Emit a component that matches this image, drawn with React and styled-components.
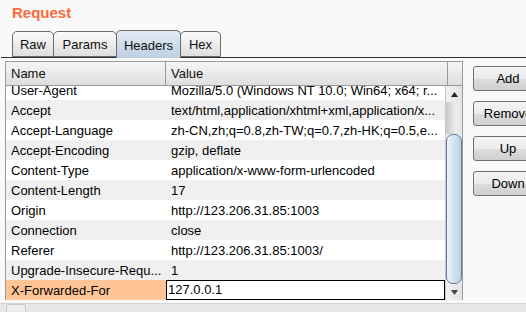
import React from "react";
import styled, { createGlobalStyle } from "styled-components";

const GlobalStyle = createGlobalStyle`
  html, body {
    margin: 0;
    padding: 0;
    background: #f9f9f9;
    overflow: hidden;
  }
  body {
    font-family: "Liberation Sans", Arial, sans-serif;
    font-size: 13px;
    color: #000;
  }
`;

const headers = [
  ["User-Agent", "Mozilla/5.0 (Windows NT 10.0; Win64; x64; r..."],
  ["Accept", "text/html,application/xhtml+xml,application/x..."],
  ["Accept-Language", "zh-CN,zh;q=0.8,zh-TW;q=0.7,zh-HK;q=0.5,e..."],
  ["Accept-Encoding", "gzip, deflate"],
  ["Content-Type", "application/x-www-form-urlencoded"],
  ["Content-Length", "17"],
  ["Origin", "http://123.206.31.85:1003"],
  ["Connection", "close"],
  ["Referer", "http://123.206.31.85:1003/"],
  ["Upgrade-Insecure-Requ...", "1"],
  ["X-Forwarded-For", "127.0.0.1"],
];

const tabs = [
  { label: "Raw", width: 42 },
  { label: "Params", width: 64 },
  { label: "Headers", width: 65 },
  { label: "Hex", width: 41 },
];
const buttons = ["Add", "Remove", "Up", "Down"];

const App = () => {
  return (
    <>
      <GlobalStyle />
      <Page>
        <Title>Request</Title>
        <TabStrip>
          {tabs.map((t) => (
            <Tab key={t.label} $w={t.width} $active={t.label === "Headers"}>
              {t.label}
            </Tab>
          ))}
        </TabStrip>
        <TabRule />
        <Body>
          <Table>
            <HeadRow>
              <HeadCell $w={160}>Name</HeadCell>
              <HeadCell $w={282}>Value</HeadCell>
              <HeadCorner />
            </HeadRow>
            <TableBody>
              <Viewport>
                <RowList>
                  {headers.map(([name, value], i) => {
                    const selected = i === headers.length - 1;
                    return (
                      <Row key={name} $striped={i % 2 === 1}>
                        <NameCell $selected={selected}>{name}</NameCell>
                        <ValueCell $editing={selected}>{value}</ValueCell>
                      </Row>
                    );
                  })}
                </RowList>
              </Viewport>
              <VScroll>
                <Arrow>
                  <svg width="7" height="5" viewBox="0 0 7 5">
                    <path d="M3.5 0 L7 5 L0 5 Z" fill="#222" />
                  </svg>
                </Arrow>
                <Track />
                <Thumb />
                <Arrow>
                  <svg width="7" height="5" viewBox="0 0 7 5">
                    <path d="M0 0 L7 0 L3.5 5 Z" fill="#444" />
                  </svg>
                </Arrow>
              </VScroll>
            </TableBody>
          </Table>
          <ButtonColumn>
            {buttons.map((b) => (
              <Button key={b}>{b}</Button>
            ))}
          </ButtonColumn>
        </Body>
        <BottomBar>
          <BottomThumb />
        </BottomBar>
      </Page>
    </>
  );
};

const Page = styled.div`
  width: 526px;
  height: 312px;
  display: flex;
  flex-direction: column;
  overflow: hidden;
`;

const Title = styled.div`
  margin: 4px 0 0 12px;
  height: 18px;
  line-height: 18px;
  font-size: 15px;
  font-weight: bold;
  color: #fa6a3c;
`;

const TabStrip = styled.div`
  margin: 8px 0 0 1px;
  padding-left: 12px;
  height: 27px;
  display: flex;
  align-items: flex-end;
  border-bottom: 1px solid #2b2f36;
`;

const Tab = styled.div`
  box-sizing: border-box;
  width: ${(p) => p.$w}px;
  height: ${(p) => (p.$active ? "28px" : "26px")};
  margin-bottom: ${(p) => (p.$active ? "-1px" : "0")};
  display: flex;
  align-items: center;
  justify-content: center;
  padding-top: ${(p) => (p.$active ? "1px" : "0")};
  border: 1px solid #6b6b6b;
  border-bottom: ${(p) => (p.$active ? "none" : "1px solid #6b6b6b")};
  border-radius: 5px 5px 0 0;
  margin-left: -1px;
  background: ${(p) =>
    p.$active
      ? "linear-gradient(#e3ebf3, #bccfe2)"
      : "linear-gradient(#fbfbfb, #dedede)"};
  color: #111;
  position: relative;
  z-index: ${(p) => (p.$active ? 1 : 0)};
`;

const TabRule = styled.div`
  margin-left: 1px;
  height: 3px;
  background: #bfd2e6;
`;

const Body = styled.div`
  display: flex;
  align-items: flex-start;
  margin: 3px 0 0 5px;
`;

const Table = styled.div`
  width: 458px;
  box-sizing: border-box;
  border-left: 1px solid #9a9a9a;
  border-top: 1px solid #9a9a9a;
  border-right: 1px solid #9a9a9a;
  display: flex;
  flex-direction: column;
`;

const HeadRow = styled.div`
  display: flex;
  height: 23px;
  border-bottom: 1px solid #9a9a9a;
  background: linear-gradient(#f5f5f5, #dfdfdf);
`;

const HeadCell = styled.div`
  box-sizing: border-box;
  width: ${(p) => p.$w}px;
  padding-left: 5px;
  line-height: 23px;
  border-right: 1px solid #9a9a9a;
  color: #111;
`;

const HeadCorner = styled.div`
  flex: 1;
`;

const TableBody = styled.div`
  display: flex;
  height: 214px;
`;

const Viewport = styled.div`
  width: 441px;
  overflow: hidden;
  background: #fff;
`;

const RowList = styled.div`
  margin-top: -6px;
`;

const Row = styled.div`
  display: flex;
  height: 20px;
  background: ${(p) => (p.$striped ? "#f0f0f0" : "#fff")};
`;

const NameCell = styled.div`
  box-sizing: border-box;
  width: 160px;
  height: 20px;
  padding-left: 5px;
  line-height: 22px;
  white-space: nowrap;
  overflow: hidden;
  background: ${(p) => (p.$selected ? "#ffc597" : "transparent")};
`;

const ValueCell = styled.div`
  box-sizing: border-box;
  flex: 1;
  height: 20px;
  padding-left: ${(p) => (p.$editing ? "1px" : "5px")};
  line-height: ${(p) => (p.$editing ? "18px" : "22px")};
  white-space: nowrap;
  overflow: hidden;
  background: ${(p) => (p.$editing ? "#fff" : "transparent")};
  border: ${(p) => (p.$editing ? "1px solid #000" : "none")};
`;

const VScroll = styled.div`
  width: 16px;
  display: flex;
  flex-direction: column;
  border-left: 1px solid #c8c8c8;
  background: #ececec;
`;

const Arrow = styled.div`
  height: 16px;
  display: flex;
  align-items: center;
  justify-content: center;
  background: linear-gradient(to right, #f2f2f2, #e2e2e2);
`;

const Track = styled.div`
  height: 32px;
  background: linear-gradient(to right, #c9c9c9, #ededed 60%, #e4e4e4);
`;

const Thumb = styled.div`
  flex: 1;
  box-sizing: border-box;
  border: 1px solid #5d7b9b;
  border-radius: 7px;
  background: linear-gradient(to right, #eef3f9, #d4e2f0 50%, #bcd0e5);
`;

const ButtonColumn = styled.div`
  margin: 5px 0 0 10px;
  display: flex;
  flex-direction: column;
  gap: 10px;
`;

const Button = styled.div`
  box-sizing: border-box;
  width: 70px;
  height: 25px;
  display: flex;
  align-items: center;
  justify-content: center;
  border: 1px solid #707070;
  border-radius: 3px;
  background: linear-gradient(#f4f4f4 0%, #ebebeb 50%, #dddddd 51%, #cfcfcf 100%);
  color: #000;
`;

const BottomBar = styled.div`
  margin-top: 3px;
  height: 9px;
  background: #e6e6e6;
  border-top: 1px solid #d4d4d4;
`;

const BottomThumb = styled.div`
  width: 18px;
  height: 7px;
  margin-left: 6px;
  border: 1px solid #c8c8c8;
  border-bottom: none;
  border-radius: 3px 3px 0 0;
  background: #ededed;
`;

export default App;
